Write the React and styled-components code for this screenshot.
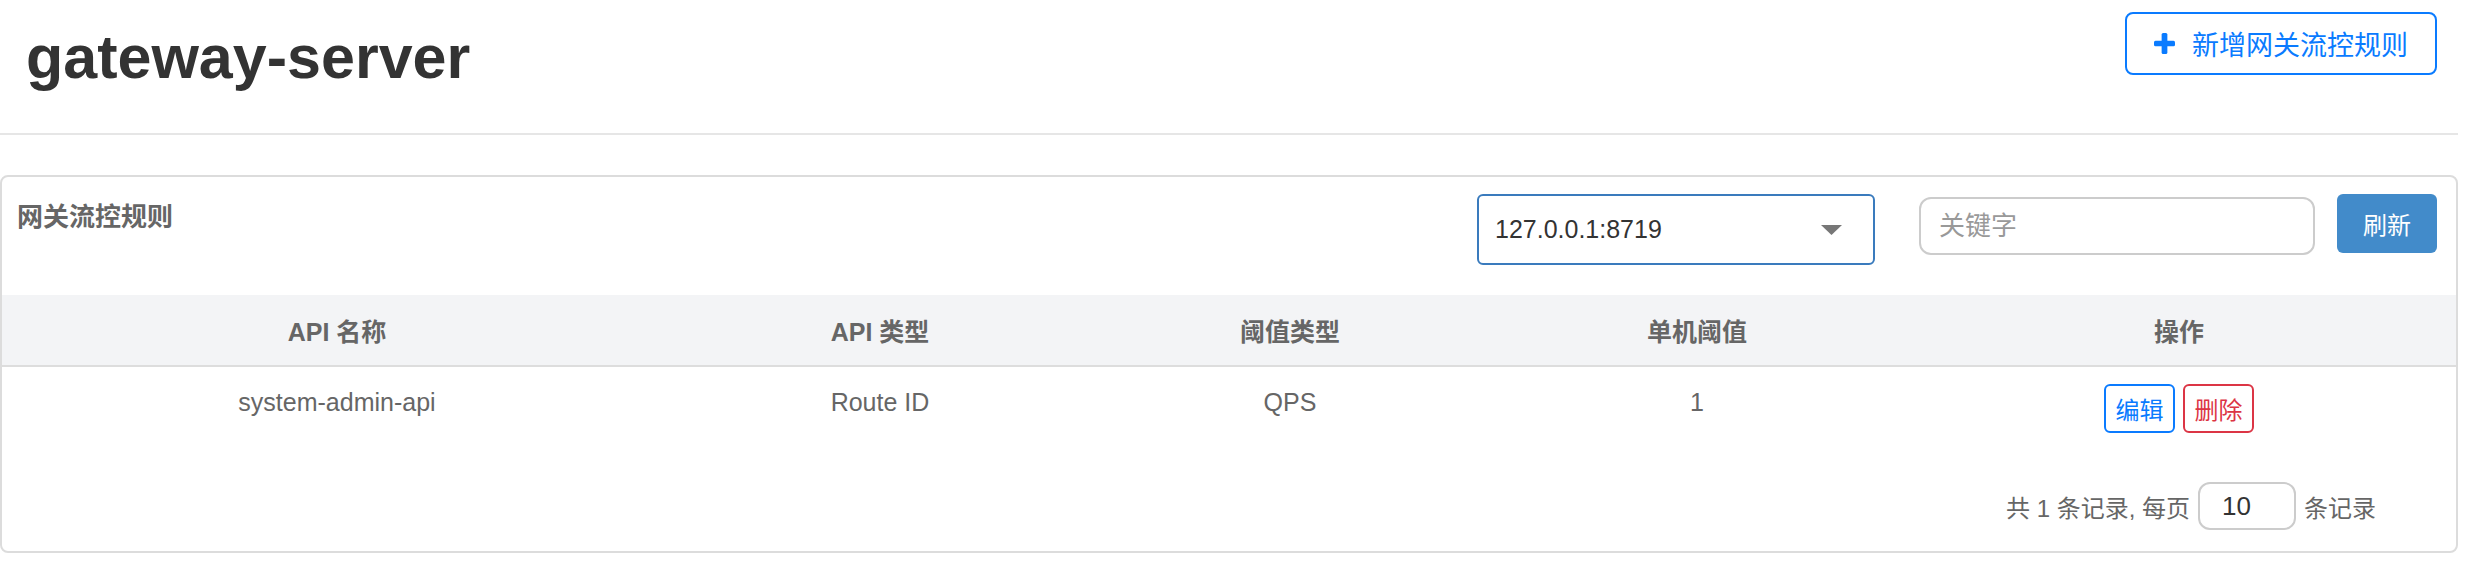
import React from "react";
import styled, { createGlobalStyle } from "styled-components";

const GlobalStyle = createGlobalStyle`
  html, body {
    margin: 0;
    padding: 0;
    background: #fff;
  }
  body {
    font-family: "Liberation Sans", "Noto Sans CJK SC", sans-serif;
    color: #333;
  }
`;

const rules = [
  { name: "system-admin-api", type: "Route ID", grade: "QPS", count: 1 },
];

const App = () => {
  return (
    <>
      <GlobalStyle />
      <Page>
        <Header>
          <Title>gateway-server</Title>
          <AddButton>
            <PlusIcon viewBox="0 0 22 22">
              <rect x="8" y="0" width="6" height="22" rx="1.6" />
              <rect x="0" y="8" width="22" height="6" rx="1.6" />
            </PlusIcon>
            新增网关流控规则
          </AddButton>
        </Header>

        <Panel>
          <PanelHead>
            <PanelTitle>网关流控规则</PanelTitle>
            <MachineSelect>
              <span>127.0.0.1:8719</span>
              <Caret viewBox="0 0 21 10">
                <polygon points="0,0 21,0 10.5,10" />
              </Caret>
            </MachineSelect>
            <SearchInput placeholder="关键字" />
            <RefreshButton>刷新</RefreshButton>
          </PanelHead>

          <RuleTable>
            <colgroup>
              <col style={{ width: 670 }} />
              <col style={{ width: 416 }} />
              <col style={{ width: 404 }} />
              <col style={{ width: 410 }} />
              <col />
            </colgroup>
            <thead>
              <tr>
                <Th>API 名称</Th>
                <Th>API 类型</Th>
                <Th>阈值类型</Th>
                <Th>单机阈值</Th>
                <Th>操作</Th>
              </tr>
            </thead>
            <tbody>
              {rules.map((r) => (
                <tr key={r.name}>
                  <Td>{r.name}</Td>
                  <Td>{r.type}</Td>
                  <Td>{r.grade}</Td>
                  <Td>{r.count}</Td>
                  <Td>
                    <Actions>
                      <SmallButton $tone="#0a7bff">编辑</SmallButton>
                      <SmallButton $tone="#dc3545">删除</SmallButton>
                    </Actions>
                  </Td>
                </tr>
              ))}
            </tbody>
          </RuleTable>

          <Pager>
            <span>共 1 条记录, 每页</span>
            <PageSize defaultValue="10" />
            <span>条记录</span>
          </Pager>
        </Panel>
      </Page>
    </>
  );
};

export default App;

const Page = styled.div`
  width: 2458px;
`;

const Header = styled.header`
  display: flex;
  justify-content: space-between;
  align-items: flex-start;
  height: 135px;
  padding: 12px 21px 0 26px;
  box-sizing: border-box;
  border-bottom: 2px solid #e6e6e6;
`;

const Title = styled.h1`
  margin: 12px 0 0;
  font-size: 61px;
  line-height: 66px;
  font-weight: bold;
  color: #333;
`;

const AddButton = styled.button`
  display: flex;
  align-items: center;
  gap: 17px;
  height: 63px;
  padding: 0 27px;
  background: #fff;
  border: 2px solid #0a7bff;
  border-radius: 8px;
  color: #0a7bff;
  font-family: "Liberation Sans", "Noto Sans CJK SC", sans-serif;
  font-size: 27px;
  cursor: pointer;
`;

const PlusIcon = styled.svg`
  width: 21px;
  height: 21px;
  fill: #0a7bff;
`;

const Panel = styled.section`
  margin-top: 40px;
  border: 2px solid #dcdcdc;
  border-radius: 8px;
  background: #fff;
`;

const PanelHead = styled.div`
  display: flex;
  align-items: flex-start;
  padding: 17px 19px 0 15px;
`;

const PanelTitle = styled.div`
  flex: 1;
  margin-top: 3px;
  font-size: 26px;
  line-height: 40px;
  font-weight: bold;
  color: #666;
`;

const MachineSelect = styled.div`
  display: flex;
  align-items: center;
  justify-content: space-between;
  width: 398px;
  height: 71px;
  box-sizing: border-box;
  padding: 0 31px 0 16px;
  margin-right: 44px;
  border: 2px solid #3a7bbd;
  border-radius: 6px;
  font-size: 25px;
  color: #333;
`;

const Caret = styled.svg`
  width: 21px;
  height: 10px;
  fill: #777;
`;

const SearchInput = styled.input`
  width: 396px;
  height: 58px;
  box-sizing: border-box;
  margin-top: 3px;
  margin-right: 22px;
  padding: 0 18px;
  border: 2px solid #cccccc;
  border-radius: 12px;
  font-family: "Liberation Sans", "Noto Sans CJK SC", sans-serif;
  font-size: 26px;
  color: #333;
  outline: none;

  &::placeholder {
    color: #999;
  }
`;

const RefreshButton = styled.button`
  width: 100px;
  height: 59px;
  border: none;
  border-radius: 6px;
  background: #428bca;
  color: #fff;
  font-family: "Liberation Sans", "Noto Sans CJK SC", sans-serif;
  font-size: 24px;
  cursor: pointer;
`;

const RuleTable = styled.table`
  width: 100%;
  margin-top: 30px;
  border-collapse: collapse;
  table-layout: fixed;
`;

const Th = styled.th`
  height: 70px;
  padding: 0;
  background: #f3f4f6;
  border-bottom: 2px solid #dddddd;
  font-size: 25px;
  font-weight: bold;
  color: #666;
  text-align: center;
`;

const Td = styled.td`
  padding: 17px 8px 15px;
  vertical-align: top;
  font-size: 25px;
  line-height: 36px;
  color: #666;
  text-align: center;
`;

const Actions = styled.div`
  display: flex;
  justify-content: center;
  gap: 8px;
`;

const SmallButton = styled.button`
  width: 71px;
  height: 49px;
  padding: 0;
  background: #fff;
  border: 2px solid ${(p) => p.$tone};
  border-radius: 6px;
  color: ${(p) => p.$tone};
  font-family: "Liberation Sans", "Noto Sans CJK SC", sans-serif;
  font-size: 24px;
  cursor: pointer;
`;

const Pager = styled.div`
  display: flex;
  justify-content: flex-end;
  align-items: center;
  gap: 8px;
  padding: 34px 80px 21px 0;
  font-size: 24px;
  color: #666;
`;

const PageSize = styled.input`
  width: 98px;
  height: 48px;
  box-sizing: border-box;
  padding: 0 0 0 22px;
  border: 2px solid #cccccc;
  border-radius: 12px;
  font-family: "Liberation Sans", sans-serif;
  font-size: 26px;
  color: #333;
  outline: none;
`;
